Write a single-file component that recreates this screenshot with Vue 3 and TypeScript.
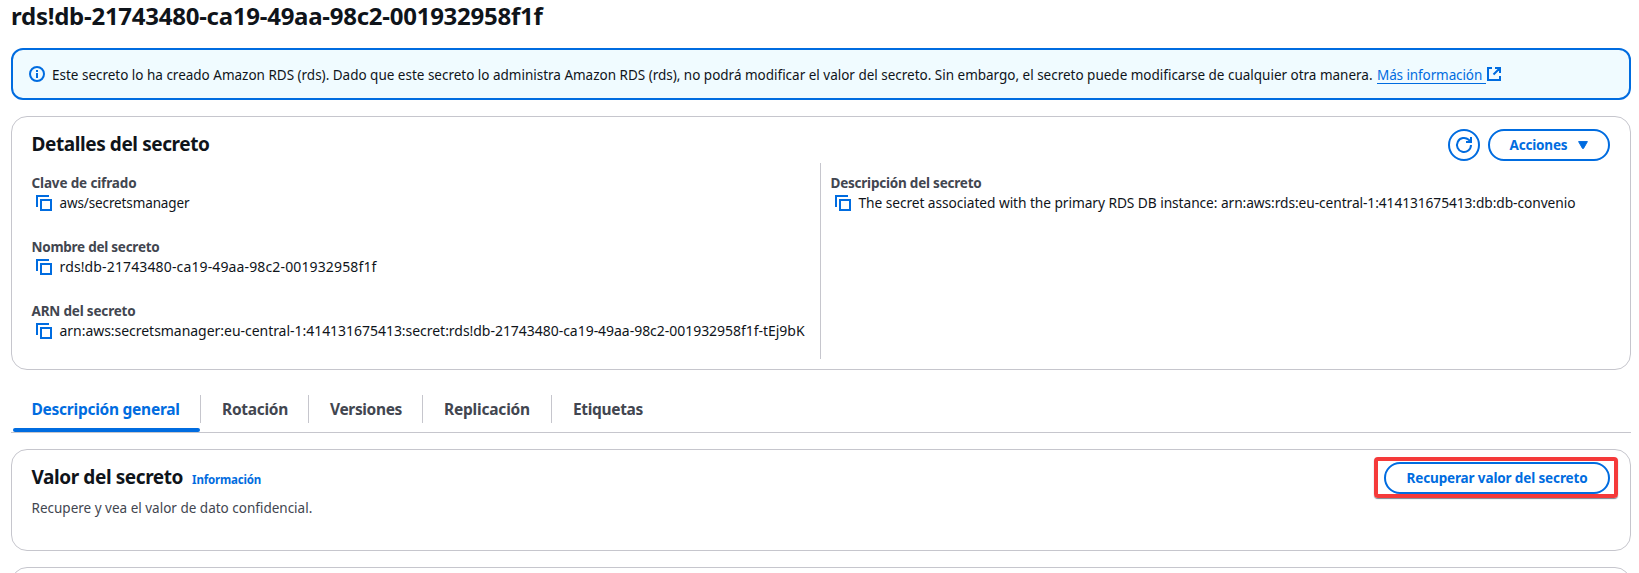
<script setup lang="ts">
interface Field { label: string; value: string; kind: string }
interface Tab { label: string; kind: string }

const secretName = 'rds!db-21743480-ca19-49aa-98c2-001932958f1f'

const leftFields: Field[] = [
  { label: 'Clave de cifrado', value: 'aws/secretsmanager', kind: 'key' },
  { label: 'Nombre del secreto', value: secretName, kind: 'name' },
  {
    label: 'ARN del secreto',
    value: `arn:aws:secretsmanager:eu-central-1:414131675413:secret:${secretName}-tEj9bK`,
    kind: 'arn',
  },
]
const rightFields: Field[] = [
  {
    label: 'Descripción del secreto',
    value: 'The secret associated with the primary RDS DB instance: arn:aws:rds:eu-central-1:414131675413:db:db-convenio',
    kind: 'description',
  },
]
const columns = [leftFields, rightFields]

const tabs: Tab[] = [
  { label: 'Descripción general', kind: 'overview' },
  { label: 'Rotación', kind: 'rotation' },
  { label: 'Versiones', kind: 'versions' },
  { label: 'Replicación', kind: 'replication' },
  { label: 'Etiquetas', kind: 'tags' },
]
</script>

<template>
  <main class="page">
    <h1 class="page-title">{{ secretName }}</h1>

    <section class="alert">
      <svg class="icon" viewBox="0 0 16 16">
        <circle cx="8" cy="8" r="7" />
        <path d="M8 12V7M8 6V4" />
      </svg>
      <p class="alert-text">Este secreto lo ha creado Amazon RDS (rds). Dado que este secreto lo administra Amazon RDS (rds), no podrá modificar el valor del secreto. Sin embargo, el secreto puede modificarse de cualquier otra manera.</p>
      <a class="link">Más información</a>
      <svg class="icon" viewBox="0 0 16 16">
        <path d="M6 2H2v12h12v-4M9 2h5v5M14 2 7.5 8.5" />
      </svg>
    </section>

    <section class="card details">
      <header class="card-header">
        <h2 class="card-title">Detalles del secreto</h2>
        <div class="actions">
          <button class="button round" aria-label="Actualizar">
            <svg class="icon" viewBox="0 0 16 16">
              <path d="M15 8a7 7 0 1 1-2.3-5.2L15 5M10 5h5V0" />
            </svg>
          </button>
          <button class="button menu">
            <span>Acciones</span>
            <svg class="caret" viewBox="0 0 10 8"><path d="M.6.6h8.8L5.5 7.4h-1z" /></svg>
          </button>
        </div>
      </header>
      <div class="columns">
        <div v-for="(column, i) in columns" :key="i" class="column">
          <div v-for="field in column" :key="field.label" class="field" :class="field.kind">
            <div class="label">{{ field.label }}</div>
            <div class="value">
              <svg class="icon" viewBox="0 0 16 16">
                <path d="M1 12V1h12M5 5h10v10H5z" />
              </svg>
              <span>{{ field.value }}</span>
            </div>
          </div>
        </div>
      </div>
    </section>

    <nav class="tabs">
      <a v-for="(tab, i) in tabs" :key="tab.label" class="tab" :class="[tab.kind, { active: i === 0 }]">
        <span>{{ tab.label }}</span>
      </a>
    </nav>

    <section class="card secret-value">
      <header class="card-header">
        <div class="heading">
          <h2 class="card-title">Valor del secreto</h2>
          <a class="info">Información</a>
        </div>
        <div class="highlight">
          <button class="button retrieve">Recuperar valor del secreto</button>
        </div>
      </header>
      <p class="hint">Recupere y vea el valor de dato confidencial.</p>
    </section>

    <section class="card next"></section>
  </main>
</template>

<style>
body {
  margin: 0;
  background: #fff;
}
</style>

<style scoped>
.page {
  box-sizing: border-box;
  width: 1639px;
  height: 573px;
  overflow: hidden;
  padding: 1px 8px 0 11px;
  background: #fff;
  color: #0f141a;
  font: 14px/20px "Noto Sans", "Open Sans", sans-serif;
  white-space: nowrap;
}
.page * {
  box-sizing: border-box;
}
h1, h2, p {
  margin: 0;
}
.page-title {
  height: 30px;
  font-size: 24px;
  line-height: 30px;
  font-weight: 700;
  letter-spacing: -0.26px;
}
.icon {
  flex: none;
  width: 16px;
  height: 16px;
  fill: none;
  stroke: #006ce0;
  stroke-width: 2;
  overflow: visible;
}
.alert {
  display: flex;
  align-items: center;
  height: 52px;
  margin-top: 17px;
  padding: 0 16px;
  border: 2px solid #006ce0;
  border-radius: 12px;
  background: #f0fbff;
}
.alert-text {
  width: 1325px;
  margin-left: 7px;
  padding-top: 1px;
  font-size: 13.5px;
  letter-spacing: -0.01px;
}
.link {
  width: 109px;
  height: 20px;
  padding-top: 1px;
  border-bottom: 1px solid #006ce0;
  color: #006ce0;
  font-size: 13.5px;
  letter-spacing: -0.1px;
}
.card {
  border: 1px solid #c6c6cd;
  border-radius: 16px;
}
.details {
  height: 254px;
  margin-top: 16px;
  padding: 12px 20px 0 19.5px;
}
.card-header {
  display: flex;
  justify-content: space-between;
}
.card-title {
  margin-top: 3px;
  font-size: 19px;
  line-height: 24px;
  font-weight: 700;
  letter-spacing: -0.41px;
}
.actions {
  display: flex;
  gap: 8px;
}
.button {
  display: flex;
  align-items: center;
  justify-content: center;
  height: 32px;
  padding: 0;
  border: 2px solid #006ce0;
  border-radius: 16px;
  background: #fff;
  color: #006ce0;
  font: 700 13.5px/20px "Noto Sans", "Open Sans", sans-serif;
  letter-spacing: -0.2px;
}
.round {
  width: 32px;
}
.menu {
  width: 122px;
  gap: 11px;
}
.caret {
  width: 10px;
  height: 8px;
  fill: #006ce0;
  stroke: #006ce0;
  stroke-linejoin: round;
}
.columns {
  display: grid;
  grid-template-columns: 788.5px 1fr;
  height: 196px;
  margin-top: 2px;
}
.column {
  display: flex;
  flex-direction: column;
  gap: 24px;
  padding-top: 10px;
}
.column + .column {
  padding-left: 9.5px;
  border-left: 1px solid #c6c6cd;
}
.label {
  color: #424650;
  font-size: 13.5px;
  font-weight: 700;
  letter-spacing: -0.22px;
}
.value {
  display: flex;
  align-items: center;
  padding-left: 4.5px;
  gap: 7.5px;
}
.key .value { font-size: 13.5px; letter-spacing: -0.12px; }
.key .label { letter-spacing: -0.14px; }
.name .value { letter-spacing: 0.135px; }
.name .label { letter-spacing: -0.25px; }
.arn .value { letter-spacing: -0.035px; }
.arn .label { letter-spacing: -0.18px; }
.description .value { font-size: 13.75px; letter-spacing: -0.07px; }
.tabs {
  display: flex;
  height: 42px;
  margin-top: 21px;
  border-bottom: 1px solid #c6c6cd;
}
.tab {
  position: relative;
  height: 41px;
  padding: 4px 0 0 21px;
  color: #424650;
  font-size: 15.5px;
  font-weight: 700;
  letter-spacing: -0.33px;
}
.tab span {
  display: block;
  line-height: 28px;
}
.tab:not(:last-child)::after {
  content: "";
  position: absolute;
  top: 4px;
  right: 0;
  width: 1px;
  height: 28px;
  background: #c6c6cd;
}
.overview { width: 190px; padding-left: 20.5px; letter-spacing: -0.26px; }
.rotation { width: 108px; letter-spacing: -0.29px; }
.versions { width: 114px; letter-spacing: -0.35px; }
.replication { width: 129px; letter-spacing: -0.2px; }
.tab.active {
  color: #006ce0;
}
.tab.active::before {
  content: "";
  position: absolute;
  left: 2px;
  right: 1px;
  bottom: 0;
  height: 4px;
  border-radius: 2px;
  background: #006ce0;
}
.secret-value {
  height: 102px;
  margin-top: 16px;
  padding: 7px 12px 0 19.5px;
}
.heading {
  display: flex;
  align-items: baseline;
  gap: 9px;
  height: 42px;
  padding-top: 5px;
}
.info {
  color: #006ce0;
  font-size: 11.5px;
  font-weight: 700;
  letter-spacing: -0.17px;
}
.highlight {
  width: 244px;
  height: 41px;
  padding: 1px 4px 0 6px;
  border: 4px solid #f53a3a;
  border-radius: 4px;
  box-shadow: 0 1px 1px #7d8590;
}
.retrieve {
  width: 226px;
  letter-spacing: -0.13px;
}
.hint {
  margin-top: -1px;
  color: #424650;
  font-size: 13.5px;
}
.next {
  height: 80px;
  margin-top: 16px;
}
</style>
